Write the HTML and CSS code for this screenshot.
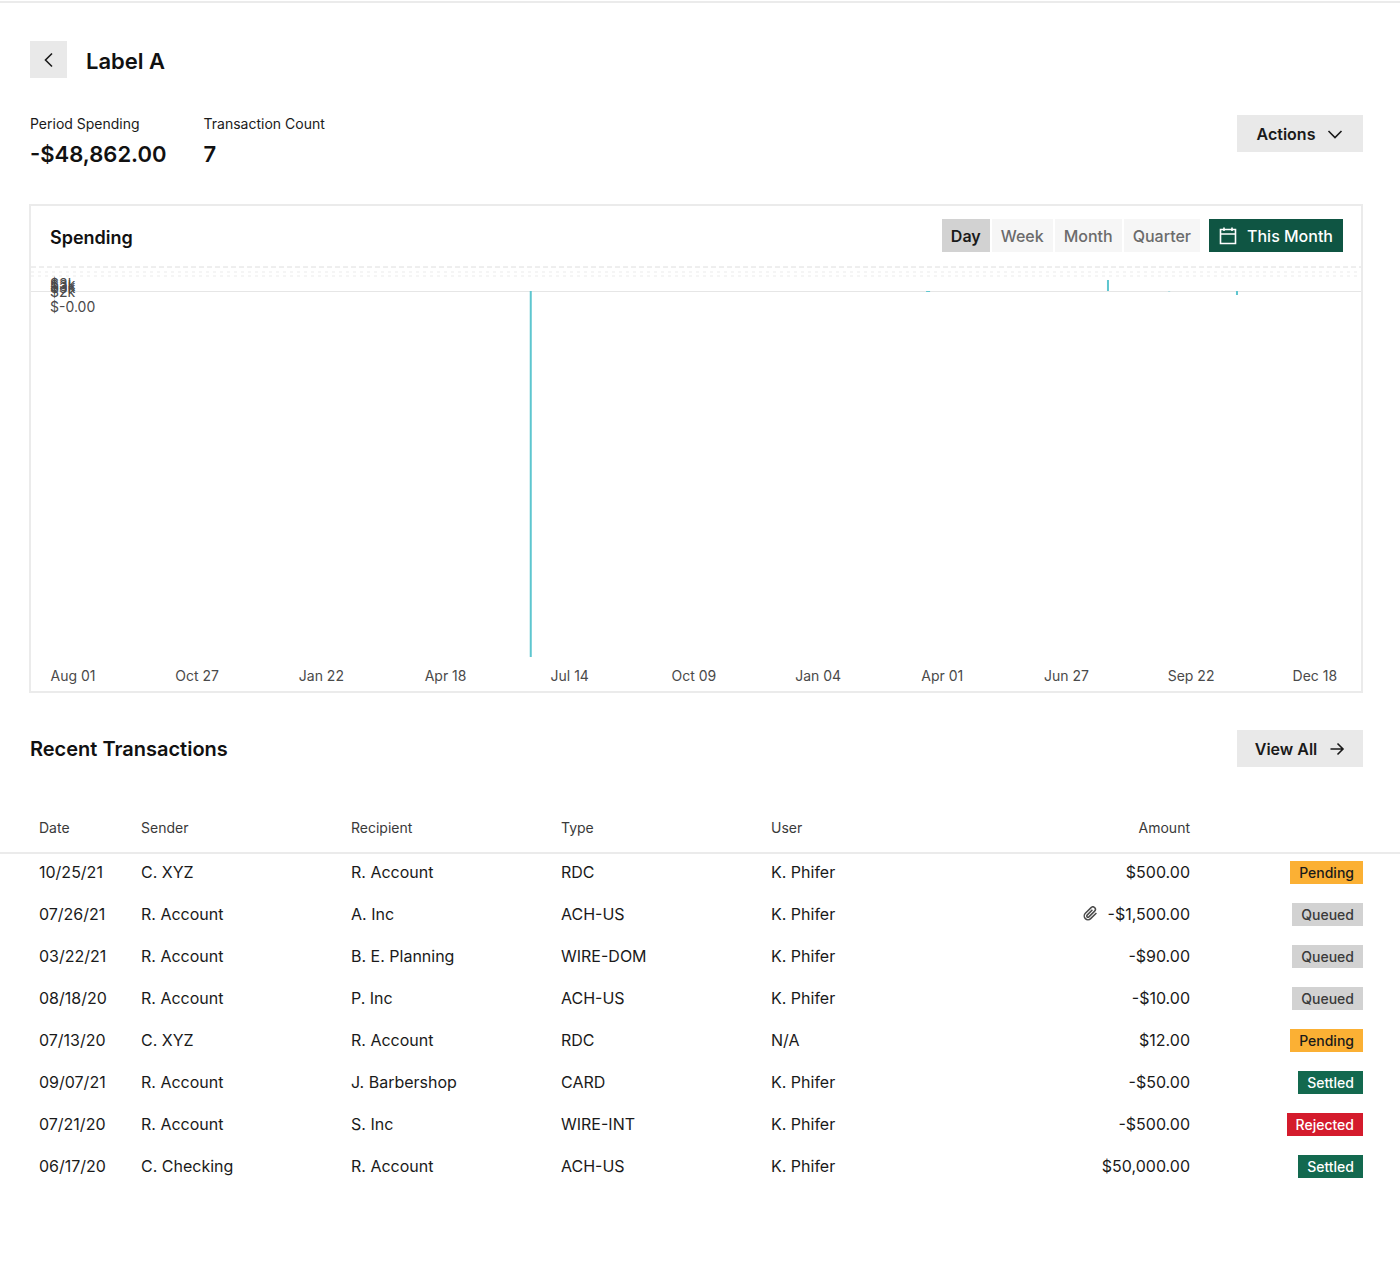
FILE: index.html
```html
<!DOCTYPE html>
<html lang="en">
<head>
    <meta charset="UTF-8">
    <meta name="viewport" content="width=device-width, initial-scale=1.0">
    <title>Label A</title>
    <link rel="stylesheet" href="styles.css">
</head>
<body>
    <header class="page-header">
        <button type="button" class="back-btn" aria-label="Back">
            <svg width="20" height="20" viewBox="0 0 20 20"><path d="M13 3.5 6.5 10l6.5 6.5"/></svg>
        </button>
        <h1>Label A</h1>
    </header>

    <section class="summary">
        <dl class="stats">
            <div class="stat">
                <dt>Period Spending</dt>
                <dd>-$48,862.00</dd>
            </div>
            <div class="stat">
                <dt>Transaction Count</dt>
                <dd>7</dd>
            </div>
        </dl>
        <button type="button" class="btn">
            Actions
            <svg width="16" height="16" viewBox="0 0 16 16"><path d="M1.5 5 8 11.5 14.5 5"/></svg>
        </button>
    </section>

    <!-- Spending chart -->
    <section class="chart-card">
        <div class="chart-header">
            <h2>Spending</h2>
            <div class="chart-controls">
                <div class="range-tabs">
                    <button type="button" class="active">Day</button>
                    <button type="button">Week</button>
                    <button type="button">Month</button>
                    <button type="button">Quarter</button>
                </div>
                <button type="button" class="period-btn">
                    <svg width="18" height="18" viewBox="0 0 18 18"><path d="M1.5 2.5h15v14h-15zM1.5 7h15M5 .5V4M13 .5V4"/></svg>
                    This Month
                </button>
            </div>
        </div>
        <svg class="chart" width="100%" height="394">
            <g class="grid">
                <line class="top" x1="0" x2="100%" y1="1" y2="1"/>
                <line x1="0" x2="100%" y1="6" y2="6"/>
                <line x1="0" x2="100%" y1="10" y2="10"/>
            </g>
            <rect class="baseline" x="0" y="25" width="100%" height="1"/>
            <g class="bars">
                <rect x="37.5%" y="25" width="2" height="366"/>
                <rect x="67.3%" y="25" width="4" height="1"/>
                <rect x="80.9%" y="14" width="2" height="11"/>
                <rect class="faint" x="85.5%" y="25" width="2" height="1"/>
                <rect x="90.6%" y="25" width="2" height="4"/>
            </g>
            <g class="y-labels">
                <text x="19" y="23">$3k</text>
                <text x="19" y="25">$3k</text>
                <text x="19" y="27">$3k</text>
                <text x="19" y="31">$2k</text>
                <text x="19" y="46">$-0.00</text>
            </g>
        </svg>
        <div class="x-labels">
            <span>Aug 01</span>
            <span>Oct 27</span>
            <span>Jan 22</span>
            <span>Apr 18</span>
            <span>Jul 14</span>
            <span>Oct 09</span>
            <span>Jan 04</span>
            <span>Apr 01</span>
            <span>Jun 27</span>
            <span>Sep 22</span>
            <span>Dec 18</span>
        </div>
    </section>

    <!-- Recent transactions -->
    <section class="recent">
        <div class="recent-header">
            <h2>Recent Transactions</h2>
            <a href="#" class="btn">
                View All
                <svg width="16" height="16" viewBox="0 0 16 16"><path d="M1.5 8H14M8.500 2.500 14 8l-5.500 5.500"/></svg>
            </a>
        </div>
        <table>
            <thead>
                <tr>
                    <th class="date">Date</th>
                    <th class="text">Sender</th>
                    <th class="text">Recipient</th>
                    <th class="text">Type</th>
                    <th class="text">User</th>
                    <th class="amount">Amount</th>
                    <th class="status" aria-label="Status"></th>
                </tr>
            </thead>
            <tbody>
                <tr>
                    <td>10/25/21</td><td>C. XYZ</td><td>R. Account</td><td>RDC</td><td>K. Phifer</td>
                    <td class="amount">$500.00</td>
                    <td class="status"><span class="badge pending">Pending</span></td>
                </tr>
                <tr>
                    <td>07/26/21</td><td>R. Account</td><td>A. Inc</td><td>ACH-US</td><td>K. Phifer</td>
                    <td class="amount">
                        <svg class="clip" width="15" height="15" viewBox="0 0 24 24"><path d="M21.44 11.05l-9.19 9.19a6 6 0 0 1-8.49-8.49l9.19-9.19a4 4 0 0 1 5.66 5.66l-9.2 9.19a2 2 0 0 1-2.83-2.83l8.49-8.48"/></svg>
                        -$1,500.00
                    </td>
                    <td class="status"><span class="badge queued">Queued</span></td>
                </tr>
                <tr>
                    <td>03/22/21</td><td>R. Account</td><td>B. E. Planning</td><td>WIRE-DOM</td><td>K. Phifer</td>
                    <td class="amount">-$90.00</td>
                    <td class="status"><span class="badge queued">Queued</span></td>
                </tr>
                <tr>
                    <td>08/18/20</td><td>R. Account</td><td>P. Inc</td><td>ACH-US</td><td>K. Phifer</td>
                    <td class="amount">-$10.00</td>
                    <td class="status"><span class="badge queued">Queued</span></td>
                </tr>
                <tr>
                    <td>07/13/20</td><td>C. XYZ</td><td>R. Account</td><td>RDC</td><td>N/A</td>
                    <td class="amount">$12.00</td>
                    <td class="status"><span class="badge pending">Pending</span></td>
                </tr>
                <tr>
                    <td>09/07/21</td><td>R. Account</td><td>J. Barbershop</td><td>CARD</td><td>K. Phifer</td>
                    <td class="amount">-$50.00</td>
                    <td class="status"><span class="badge settled">Settled</span></td>
                </tr>
                <tr>
                    <td>07/21/20</td><td>R. Account</td><td>S. Inc</td><td>WIRE-INT</td><td>K. Phifer</td>
                    <td class="amount">-$500.00</td>
                    <td class="status"><span class="badge rejected">Rejected</span></td>
                </tr>
                <tr>
                    <td>06/17/20</td><td>C. Checking</td><td>R. Account</td><td>ACH-US</td><td>K. Phifer</td>
                    <td class="amount">$50,000.00</td>
                    <td class="status"><span class="badge settled">Settled</span></td>
                </tr>
            </tbody>
        </table>
    </section>
</body>
</html>
```
FILE: styles.css
```css
* {
    box-sizing: border-box;
}
body {
    margin: 0;
    padding-top: 1px;
    font-family: Inter, sans-serif;
    font-size: 16px;
    color: #1a1a1a;
    background: #fff;
}
h1, h2, dl, dd {
    margin: 0;
}
h1, h2, dd {
    color: #111;
    font-weight: 600;
}
button {
    font-family: inherit;
    border: none;
    cursor: pointer;
}
svg {
    display: block;
    fill: none;
    stroke: currentColor;
    stroke-width: 1.6;
}

/* Header */
.page-header {
    display: flex;
    align-items: center;
    gap: 19px;
    padding: 38px 37px 0 30px;
    border-top: 2px solid #ebebeb;
}
.page-header h1 {
    font-size: 22px;
    line-height: 34px;
    padding-top: 3px;
}
.back-btn {
    display: flex;
    align-items: center;
    justify-content: center;
    width: 37px;
    height: 37px;
    padding: 0;
    color: #1a1a1a;
    background: #e9e9e9;
}
.summary {
    display: flex;
    justify-content: space-between;
    align-items: flex-start;
    padding: 37px 37px 0 30px;
}
.stats {
    display: flex;
    gap: 37px;
}
.stat dt {
    font-size: 14px;
    line-height: 18px;
}
.stat dd {
    font-size: 22px;
    line-height: 28px;
    padding-top: 7px;
}
.btn {
    display: flex;
    align-items: center;
    justify-content: center;
    gap: 12px;
    width: 126px;
    height: 37px;
    padding: 0;
    font-size: 16px;
    font-weight: 600;
    color: #1a1a1a;
    background: #e9e9e9;
    text-decoration: none;
}

/* Chart */
.chart-card {
    margin: 36px 37px 0 29px;
    border: 2px solid #ebebeb;
}
.chart-header {
    display: flex;
    justify-content: space-between;
    align-items: center;
    padding: 13px 18px 14px 19px;
}
.chart-header h2 {
    font-size: 18px;
    padding-top: 3px;
}
.chart-controls {
    display: flex;
    gap: 9px;
}
.range-tabs {
    display: flex;
    gap: 2px;
}
.range-tabs button {
    height: 33px;
    padding: 0 9px;
    font-size: 16px;
    font-weight: 500;
    color: #6b6b6b;
    background: #f6f6f6;
}
.range-tabs .active {
    color: #1a1a1a;
    font-weight: 600;
    background: #d2d2d2;
}
.period-btn {
    display: flex;
    align-items: center;
    gap: 10px;
    height: 33px;
    padding: 0 10px;
    font-size: 16px;
    font-weight: 500;
    color: #fff;
    background: #0f5543;
}
.chart {
    stroke: none;
}
.grid {
    stroke: #ebebeb;
    stroke-width: 1;
    stroke-dasharray: 3 4;
}
.grid .top {
    stroke: #dedede;
    stroke-dasharray: 5 3;
}
.baseline {
    fill: #e6e6e6;
}
.bars {
    fill: #5ec6cf;
}
.bars .faint {
    opacity: 0.4;
}
.y-labels {
    fill: #4a4a4a;
    font-size: 14px;
}
.x-labels {
    display: flex;
    justify-content: space-between;
    padding: 7px 23px 6px 19px;
    font-size: 14px;
    line-height: 18px;
    color: #4a4a4a;
}
.x-labels span {
    width: 46px;
    text-align: center;
    white-space: nowrap;
}

/* Transactions */
.recent-header {
    display: flex;
    justify-content: space-between;
    align-items: center;
    padding: 37px 37px 36px 30px;
}
.recent-header h2 {
    font-size: 20px;
}
table {
    width: 100%;
    table-layout: fixed;
    border-spacing: 0;
}
th, td {
    height: 42px;
    padding: 0 0 2px 9px;
    text-align: left;
    white-space: nowrap;
}
th {
    height: 49px;
    padding-bottom: 0;
    font-size: 14px;
    font-weight: 400;
    color: #3a3a3a;
}
thead {
    box-shadow: 0 2px 0 #ebebeb;
}
.date {
    width: 132px;
}
.text {
    width: 15%;
}
th:first-child, td:first-child {
    padding-left: 39px;
}
.amount {
    padding-right: 10px;
    text-align: right;
}
.status {
    width: 200px;
    padding-right: 37px;
    text-align: right;
}
.clip {
    display: inline-block;
    margin-right: 5px;
    vertical-align: -1px;
    color: #4a4a4a;
    stroke-width: 2.4;
}
.badge {
    display: inline-block;
    padding: 0 9px;
    font-size: 14px;
    font-weight: 500;
    line-height: 23px;
    vertical-align: middle;
}
.pending {
    color: #1a1a1a;
    background: #fbb034;
}
.queued {
    color: #3a3a3a;
    background: #d2d2d2;
}
.settled {
    color: #fff;
    background: #13694f;
}
.rejected {
    color: #fff;
    background: #d41b2c;
}
```
